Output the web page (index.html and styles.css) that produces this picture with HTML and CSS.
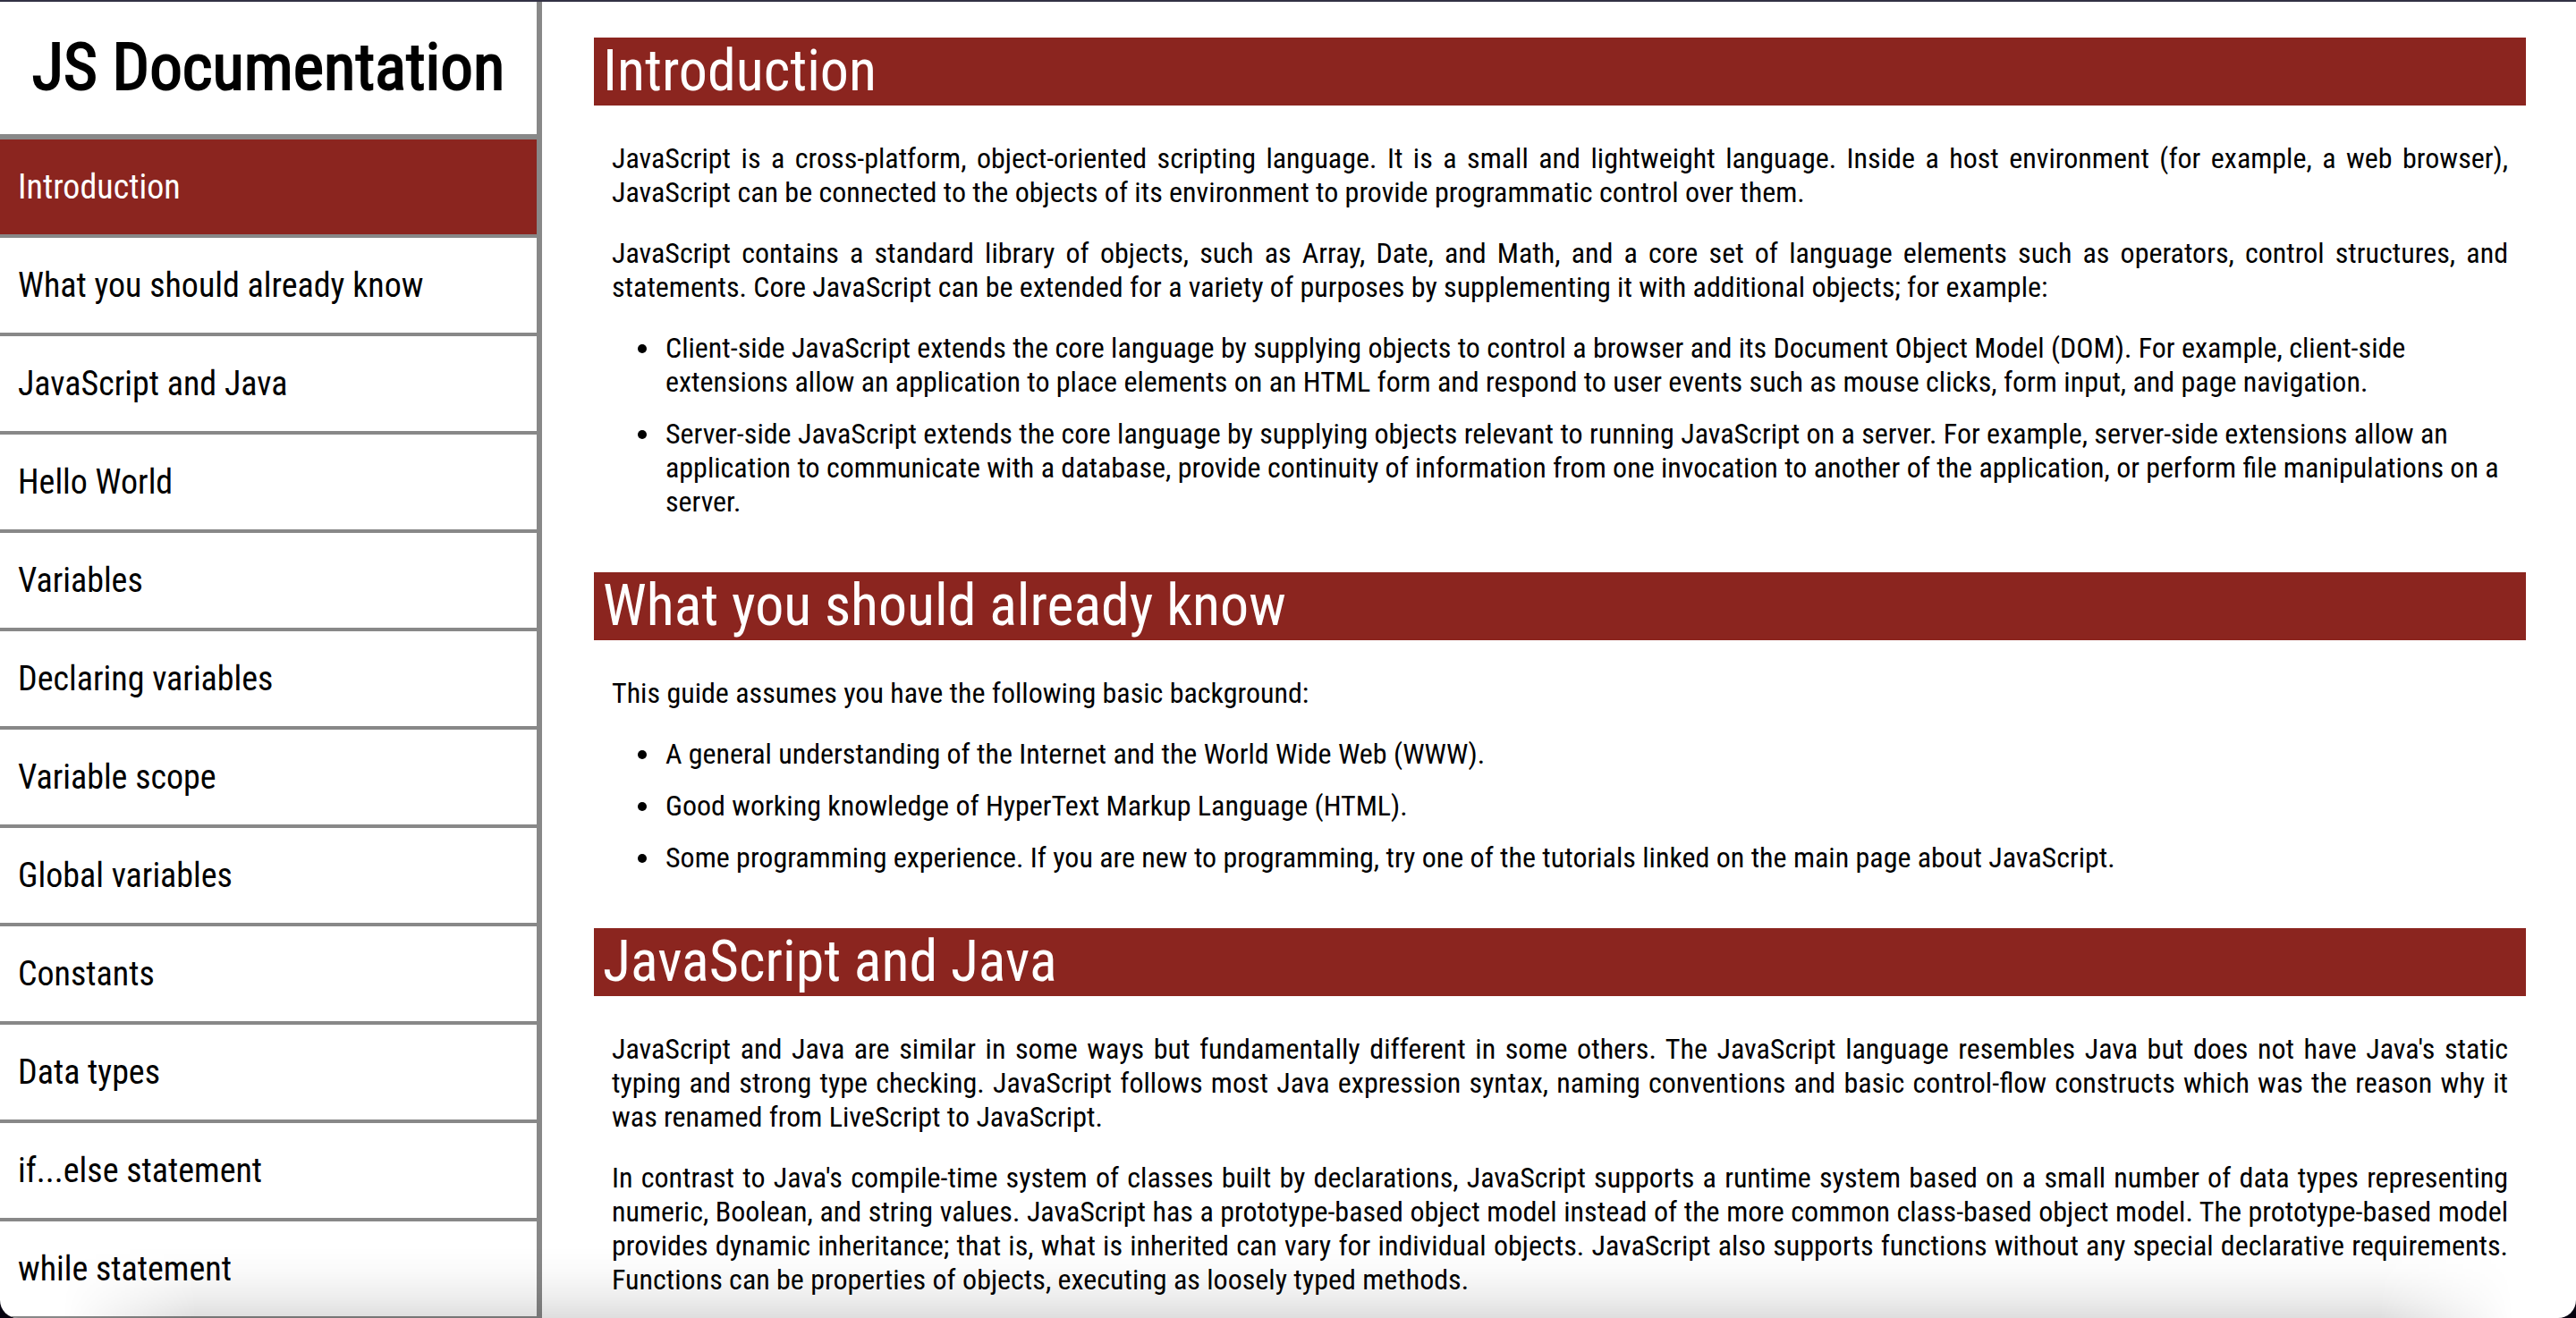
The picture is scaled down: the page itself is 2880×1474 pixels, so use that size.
FILE: index.html
```html
<!DOCTYPE html>
<html lang="en">
<head>
<meta charset="utf-8">
<title>JS Documentation</title>
<link rel="stylesheet" href="styles.css">
</head>
<body>
<div class="window">
  <nav class="sidebar" aria-label="Sections">
    <header class="sidebar-title">JS Documentation</header>
    <ul class="nav-list">
      <li><a class="nav-link active" href="#introduction">Introduction</a></li>
      <li><a class="nav-link" href="#already-know">What you should already know</a></li>
      <li><a class="nav-link" href="#javascript-and-java">JavaScript and Java</a></li>
      <li><a class="nav-link" href="#hello-world">Hello World</a></li>
      <li><a class="nav-link" href="#variables">Variables</a></li>
      <li><a class="nav-link" href="#declaring-variables">Declaring variables</a></li>
      <li><a class="nav-link" href="#variable-scope">Variable scope</a></li>
      <li><a class="nav-link" href="#global-variables">Global variables</a></li>
      <li><a class="nav-link" href="#constants">Constants</a></li>
      <li><a class="nav-link" href="#data-types">Data types</a></li>
      <li><a class="nav-link" href="#if-else">if...else statement</a></li>
      <li><a class="nav-link" href="#while">while statement</a></li>
    </ul>
  </nav>
  <main class="content">
    <section id="introduction">
      <h2>Introduction</h2>
      <div class="section-body">
        <p>JavaScript is a cross-platform, object-oriented scripting language. It is a small and lightweight language. Inside a host environment (for example, a web browser), JavaScript can be connected to the objects of its environment to provide programmatic control over them.</p>
        <p>JavaScript contains a standard library of objects, such as Array, Date, and Math, and a core set of language elements such as operators, control structures, and statements. Core JavaScript can be extended for a variety of purposes by supplementing it with additional objects; for example:</p>
        <ul>
          <li>Client-side JavaScript extends the core language by supplying objects to control a browser and its Document Object Model (DOM). For example, client-side extensions allow an application to place elements on an HTML form and respond to user events such as mouse clicks, form input, and page navigation.</li>
          <li>Server-side JavaScript extends the core language by supplying objects relevant to running JavaScript on a server. For example, server-side extensions allow an application to communicate with a database, provide continuity of information from one invocation to another of the application, or perform file manipulations on a server.</li>
        </ul>
      </div>
    </section>
    <section id="already-know">
      <h2>What you should already know</h2>
      <div class="section-body">
        <p>This guide assumes you have the following basic background:</p>
        <ul>
          <li>A general understanding of the Internet and the World Wide Web (WWW).</li>
          <li>Good working knowledge of HyperText Markup Language (HTML).</li>
          <li>Some programming experience. If you are new to programming, try one of the tutorials linked on the main page about JavaScript.</li>
        </ul>
      </div>
    </section>
    <section id="javascript-and-java">
      <h2>JavaScript and Java</h2>
      <div class="section-body">
        <p>JavaScript and Java are similar in some ways but fundamentally different in some others. The JavaScript language resembles Java but does not have Java's static typing and strong type checking. JavaScript follows most Java expression syntax, naming conventions and basic control-flow constructs which was the reason why it was renamed from LiveScript to JavaScript.</p>
        <p>In contrast to Java's compile-time system of classes built by declarations, JavaScript supports a runtime system based on a small number of data types representing numeric, Boolean, and string values. JavaScript has a prototype-based object model instead of the more common class-based object model. The prototype-based model provides dynamic inheritance; that is, what is inherited can vary for individual objects. JavaScript also supports functions without any special declarative requirements. Functions can be properties of objects, executing as loosely typed methods.</p>
      </div>
    </section>
  </main>
  <div class="bottom-shade" aria-hidden="true"></div>
</div>
</body>
</html>
```

FILE: styles.css
```css
* {
  box-sizing: border-box;
}

html {
  background: #05020f;
}

body {
  margin: 0;
  font-family: "Roboto Condensed", "Liberation Sans Narrow", sans-serif;
  font-size: 32px;
  line-height: 38px;
  color: #000;
}

ul {
  margin: 0;
  padding: 0;
}

.window {
  position: relative;
  display: flex;
  height: 100vh;
  overflow: hidden;
  border-top: 2px solid #323144;
  border-radius: 0 0 20px 20px;
  background: #fff;
}

.sidebar {
  flex: 0 0 606px;
  border-right: 6px solid #888;
}

.sidebar-title {
  padding: 28px 0 30px;
  border-bottom: 2px solid #888;
  font-size: 73px;
  font-weight: 400;
  line-height: 90px;
  text-align: center;
  white-space: nowrap;
  -webkit-text-stroke: 2px #000;
}

.nav-list {
  list-style: none;
  border-top: 4px solid #888;
}

.nav-link {
  display: block;
  padding: 30px 20px 29px;
  border-bottom: 4px solid #888;
  font-size: 38px;
  line-height: 47px;
  color: #000;
  text-decoration: none;
}

.nav-link.active {
  background: #8b251f;
  color: #fff;
}

.content {
  flex: 1;
  min-width: 0;
  padding: 40px 56px 0 58px;
}

h2 {
  margin: 0;
  padding: 0 10px;
  background: #8b251f;
  color: #fff;
  font-size: 64px;
  font-weight: 400;
  line-height: 76px;
}

.section-body {
  padding: 40px 20px 60px;
}

.section-body p {
  margin: 0 0 30px;
  text-align: justify;
}

.section-body ul {
  padding-left: 56px;
}

.section-body li {
  padding-left: 4px;
}

.section-body li + li {
  margin-top: 20px;
}

/* Shadow rising from the bottom edge, faded at both ends */
.bottom-shade {
  position: absolute;
  inset: auto 0 0;
  height: 80px;
  background: linear-gradient(to top, rgb(0 0 0 / 13%), rgb(0 0 0 / 7%) 28%, rgb(0 0 0 / 2%) 65%, transparent);
  mask-image: linear-gradient(to right, transparent 70px, #000 220px calc(100% - 220px), transparent calc(100% - 70px));
  pointer-events: none;
}
```
